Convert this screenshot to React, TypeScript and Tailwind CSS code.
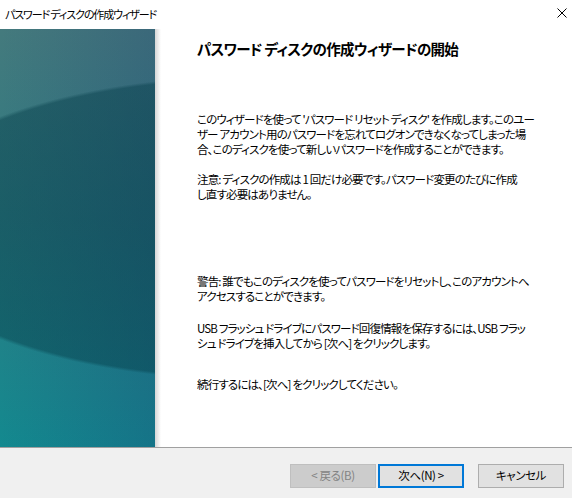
const font = "font-['Noto_Sans_CJK_JP','Noto_Sans',sans-serif] [font-feature-settings:'palt']";

function Para({ lines, className = '' }: { lines: string[]; className?: string }) {
  return (
    <div className={className}>
      {lines.map((l) => (
        <div key={l} className="whitespace-nowrap">
          {l}
        </div>
      ))}
    </div>
  );
}

function WizButton({ label, variant }: { label: string; variant: 'disabled' | 'default' | 'normal' }) {
  const styles = {
    disabled: 'border border-[#bfbfbf] bg-[#cccccc] text-[#838383]',
    default: 'border-2 border-[#0078d7] bg-[#e1e1e1] text-black',
    normal: 'border border-[#adadad] bg-[#e1e1e1] text-black',
  }[variant];
  return (
    <button
      className={`flex h-[24px] w-[86px] items-center justify-center text-[11.5px] tracking-[-0.4px] ${styles}`}
    >
      {label}
    </button>
  );
}

export default function App() {
  return (
    <div className={`flex h-[498px] w-[572px] flex-col bg-white text-black ${font}`}>
      <div className="flex h-[29px] shrink-0 items-center justify-between pl-[5px] pr-[5px]">
        <span className="text-[11px] tracking-[-1.1px]">パスワード ディスクの作成ウィザード</span>
        <svg width="10" height="10" viewBox="0 0 10 10" className="mb-[3px]">
          <path d="M0.5 0.5 L9.5 9.5 M9.5 0.5 L0.5 9.5" stroke="#000" strokeWidth="1" />
        </svg>
      </div>

      <div className="flex min-h-0 flex-1">
        <div className="w-[155px] shrink-0 bg-[radial-gradient(ellipse_368px_152px_at_250px_199px,rgba(4,60,72,0.5)_0%,rgba(4,60,72,0.45)_98%,transparent_100%),linear-gradient(to_right,transparent,rgba(25,40,110,0.22)),linear-gradient(to_bottom,#447a7d,#2e7b82_45%,#13898f)]" />
        <div className="w-[6px] shrink-0 bg-gradient-to-r from-[#d6d6d6] to-white" />
        <div className="flex-1 pl-[36px] pt-[9px] text-[11.5px] leading-[15px] tracking-[-0.85px]">
          <h1 className="text-[14.5px] font-bold leading-[22px] tracking-[-0.7px]">
            パスワード ディスクの作成ウィザードの開始
          </h1>
          <Para
            className="mt-[52px]"
            lines={[
              "このウィザードを使って 'パスワード リセット ディスク' を作成します。このユー",
              'ザー アカウント用のパスワードを忘れてログオンできなくなってしまった場',
              '合、このディスクを使って新しいパスワードを作成することができます。',
            ]}
          />
          <Para
            className="mt-[15px]"
            lines={['注意: ディスクの作成は 1 回だけ必要です。パスワード変更のたびに作成', 'し直す必要はありません。']}
          />
          <Para
            className="mt-[72px]"
            lines={['警告: 誰でもこのディスクを使ってパスワードをリセットし、このアカウントへ', 'アクセスすることができます。']}
          />
          <Para
            className="mt-[17px]"
            lines={[
              'USB フラッシュ ドライブにパスワード回復情報を保存するには、USB フラッ',
              'シュ ドライブを挿入してから [次へ] をクリックします。',
            ]}
          />
          <Para className="mt-[26px]" lines={['続行するには、[次へ] をクリックしてください。']} />
        </div>
      </div>

      <div className="h-px shrink-0 bg-[#a0a0a0]" />
      <div className="flex h-[50px] shrink-0 items-center justify-end bg-[#f0f0f0] pb-[2px] pr-[8px] pt-[8px]">
        <WizButton label="< 戻る(B)" variant="disabled" />
        <div className="ml-[2px]">
          <WizButton label="次へ(N) >" variant="default" />
        </div>
        <div className="ml-[14px]">
          <WizButton label="キャンセル" variant="normal" />
        </div>
      </div>
    </div>
  );
}
